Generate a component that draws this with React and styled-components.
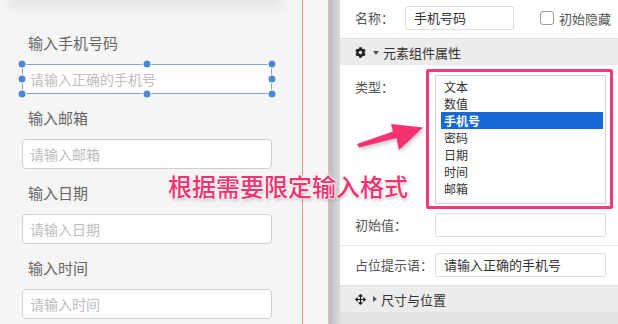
import React from "react";
import styled, { createGlobalStyle } from "styled-components";
import { FaCog, FaArrowsAlt } from "react-icons/fa";

const GlobalStyle = createGlobalStyle`
  body {
    margin: 0;
    font-family: "Noto Sans CJK SC", "Noto Sans", sans-serif;
    background: #fff;
  }
`;

const Page = styled.div`
  position: relative;
  display: flex;
  width: 618px;
  height: 324px;
  overflow: hidden;
`;

const LeftPane = styled.div`
  width: 303px;
  flex-shrink: 0;
  background: #f5f5f5;
  border-right: 1px solid #e58f8f;
  padding-left: 22px;
  box-sizing: border-box;
`;

const CardShadow = styled.div`
  height: 0;
  margin: 0 24px 33px -8px;
  box-shadow: 0 2px 12px 6px rgba(0, 0, 0, 0.07);
`;

const Field = styled.div`
  margin-bottom: 14px;
`;

const FieldLabel = styled.div`
  height: 20px;
  line-height: 20px;
  font-size: 15px;
  color: #666;
  padding-left: 6px;
  margin-bottom: 11px;
`;

const TextBox = styled.div`
  width: 250px;
  height: 30px;
  box-sizing: border-box;
  background: #fff;
  border: 1px solid ${(p) => (p.$selected ? "#7ea6dc" : "#cfcfcf")};
  border-radius: ${(p) => (p.$selected ? "1px" : "4px")};
  padding-left: 7px;
  line-height: 28px;
  font-size: 14px;
  color: #bdbdbd;
`;

const Selection = styled.div`
  position: relative;
  width: 250px;
`;

const Handle = styled.span`
  position: absolute;
  width: 7px;
  height: 7px;
  border-radius: 50%;
  background: #4d87cf;
  box-shadow: 0 0 0 1px #fff;
  transform: translate(-50%, -50%);
`;

const Gutter = styled.div`
  width: 25px;
  flex-shrink: 0;
  background: #f6f6f6;
  border-right: 1px solid #ebb9b9;
`;

const EdgeShade = styled.div`
  width: 11px;
  flex-shrink: 0;
  background: linear-gradient(to right, #bcbcbc, #dadada);
`;

const RightPane = styled.div`
  flex: 1;
  min-width: 0;
  background: #fff;
  font-size: 13px;
  color: #444;
`;

const Row = styled.div`
  display: flex;
  align-items: ${(p) => p.$align || "center"};
  padding: ${(p) => p.$pad || "0"};
  padding-left: 15px;
  padding-right: 12px;
  border-bottom: ${(p) => (p.$divider ? "1px solid #e6e6e6" : "none")};
`;

const Label = styled.div`
  width: ${(p) => p.$w || 80}px;
  flex-shrink: 0;
  line-height: 20px;
  color: #555;
  white-space: nowrap;
  padding-top: ${(p) => p.$top || 0}px;
`;

const Input = styled.div`
  flex: ${(p) => (p.$w ? "none" : 1)};
  width: ${(p) => (p.$w ? `${p.$w}px` : "auto")};
  height: 24px;
  box-sizing: border-box;
  border: 1px solid #dedede;
  border-radius: 2px;
  padding-left: 8px;
  line-height: 22px;
  font-size: 13px;
  color: #333;
`;

const Check = styled.label`
  display: flex;
  align-items: center;
  gap: 5px;
  margin-left: 26px;
  margin-right: -12px;
  color: #555;
  white-space: nowrap;
  &::before {
    content: "";
    width: 12px;
    height: 12px;
    border: 1px solid #9a9a9a;
    border-radius: 3px;
    background: #fff;
  }
`;

const SectionBar = styled.div`
  display: flex;
  align-items: center;
  height: 27px;
  box-sizing: border-box;
  padding-left: 15px;
  padding-top: ${(p) => p.$drop || 0}px;
  background: ${(p) => p.$bg || "#ececec"};
  border-top: 1px solid #e0e0e0;
  color: #333;
  font-size: 13px;
  white-space: nowrap;
  svg {
    font-size: 11px;
    color: #222;
  }
`;

const Caret = styled.span`
  width: 0;
  height: 0;
  margin: 0 4px 0 7px;
  border: 3.5px solid transparent;
  ${(p) =>
    p.$open
      ? "border-top: 4px solid #555; border-bottom: 0; margin-top: 2px;"
      : "border-left: 4px solid #555; border-right: 0;"}
`;

const ListWrap = styled.div`
  position: relative;
  flex: 1;
`;

const ListBox = styled.div`
  height: 129px;
  box-sizing: border-box;
  border: 1px solid #d4d4d4;
  padding: 2px 2px 0 5px;
`;

const Option = styled.div`
  height: 17px;
  line-height: 17px;
  padding-left: 3px;
  font-size: 12px;
  color: ${(p) => (p.$active ? "#fff" : "#333")};
  background: ${(p) => (p.$active ? "#1769d6" : "transparent")};
  font-weight: ${(p) => (p.$active ? 700 : 400)};
`;

const Highlight = styled.div`
  position: absolute;
  left: -9px;
  right: -7px;
  top: -6px;
  bottom: -5px;
  border: 3px solid #f23a74;
  border-radius: 2px;
  pointer-events: none;
`;

const Callout = styled.div`
  position: absolute;
  left: 168px;
  top: 168px;
  font-size: 24px;
  font-weight: 500;
  color: #f4326f;
  text-shadow: 0 0 2px #fff, 0 0 2px #fff, 0 0 3px #fff, 1px 2px 3px rgba(0, 0, 0, 0.25);
  white-space: nowrap;
`;

const ArrowSvg = styled.svg`
  position: absolute;
  left: 350px;
  top: 115px;
  filter: drop-shadow(1px 2px 2px rgba(0, 0, 0, 0.25));
`;

const fields = [
  { label: "输入手机号码", placeholder: "请输入正确的手机号", selected: true },
  { label: "输入邮箱", placeholder: "请输入邮箱" },
  { label: "输入日期", placeholder: "请输入日期" },
  { label: "输入时间", placeholder: "请输入时间" },
];

const handles = [
  [0, 0], [50, 0], [100, 0],
  [0, 50], [100, 50],
  [0, 100], [50, 100], [100, 100],
];

const types = ["文本", "数值", "手机号", "密码", "日期", "时间", "邮箱"];

export default function App() {
  return (
    <>
      <GlobalStyle />
      <Page>
        <LeftPane>
          <CardShadow />
          {fields.map((f) => (
            <Field key={f.label}>
              <FieldLabel>{f.label}</FieldLabel>
              {f.selected ? (
                <Selection>
                  <TextBox $selected>{f.placeholder}</TextBox>
                  {handles.map(([x, y], i) => (
                    <Handle key={i} style={{ left: `${x}%`, top: `${y}%` }} />
                  ))}
                </Selection>
              ) : (
                <TextBox>{f.placeholder}</TextBox>
              )}
            </Field>
          ))}
        </LeftPane>
        <Gutter />
        <EdgeShade />
        <RightPane>
          <Row $pad="6px 0 8px">
            <Label $w={50}>名称：</Label>
            <Input $w={109}>手机号码</Input>
            <Check>初始隐藏</Check>
          </Row>
          <SectionBar>
            <FaCog />
            <Caret $open />
            元素组件属性
          </SectionBar>
          <Row $align="flex-start" $pad="10px 0 9px">
            <Label $top={2}>类型：</Label>
            <ListWrap>
              <ListBox>
                {types.map((t) => (
                  <Option key={t} $active={t === "手机号"}>
                    {t}
                  </Option>
                ))}
              </ListBox>
              <Highlight />
            </ListWrap>
          </Row>
          <Row $pad="0 0 8px" $divider>
            <Label>初始值：</Label>
            <Input />
          </Row>
          <Row $pad="7px 0 8px">
            <Label>占位提示语：</Label>
            <Input>请输入正确的手机号</Input>
          </Row>
          <SectionBar>
            <FaArrowsAlt />
            <Caret />
            尺寸与位置
          </SectionBar>
          <SectionBar $bg="#e2e2e2" $drop={12}>
            <FaCog />
            <Caret />
            样式
          </SectionBar>
        </RightPane>
        <ArrowSvg width="80" height="45" viewBox="350 115 80 45">
          <polygon
            points="357,144 393,131.5 391,124 423,127.5 399,150 396.5,138 359,147.5"
            fill="#f4326f"
          />
        </ArrowSvg>
        <Callout>根据需要限定输入格式</Callout>
      </Page>
    </>
  );
}
